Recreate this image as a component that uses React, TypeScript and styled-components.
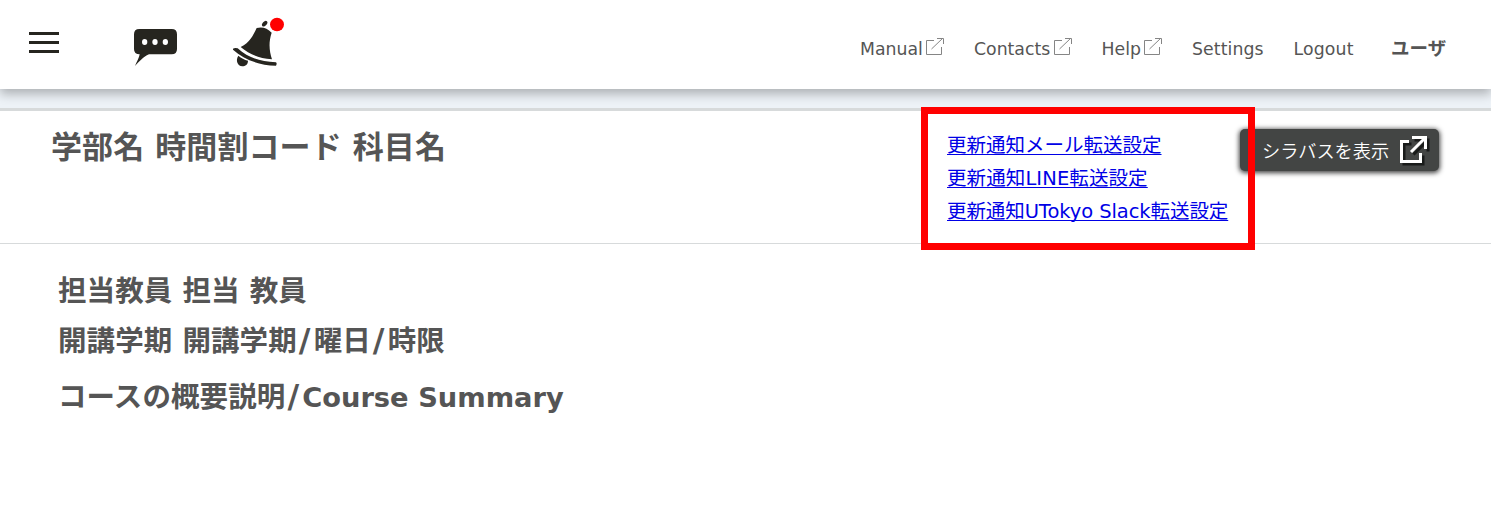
import React from "react";
import styled, { createGlobalStyle } from "styled-components";

const Global = createGlobalStyle`
  * { box-sizing: border-box; }
  body {
    margin: 0;
    background: #fff;
    color: #555;
    font-family: "DejaVu Sans", "Noto Sans CJK JP", sans-serif;
  }
  h1, h2, p, ul { margin: 0; padding: 0; font-weight: inherit; }
`;

const Page = styled.div`
  display: flex;
  flex-direction: column;
  height: 525px;
  overflow: hidden;
`;

const Header = styled.header`
  position: relative;
  z-index: 1;
  display: flex;
  justify-content: space-between;
  height: 89px;
  background: #fff;
  box-shadow: 0 5px 10px rgba(0, 0, 0, 0.27);
`;

const Tools = styled.div`
  display: flex;
  align-items: flex-start;
  padding-left: 29px;
`;

const Menu = styled.div`
  display: flex;
  flex-direction: column;
  gap: 6px;
  width: 30px;
  margin-top: 32px;
`;

const MenuBar = styled.span`
  height: 3px;
  background: #26251f;
`;

const ToolIcon = styled.svg<{ $left: number; $top: number }>`
  flex: none;
  margin: ${(p) => p.$top}px 0 0 ${(p) => p.$left}px;
`;

const Nav = styled.nav`
  display: flex;
  padding: 37px 45px 0 0;
  height: 62px;
`;

const NavItem = styled.a<{ $width: number; $spacing?: number }>`
  display: flex;
  width: ${(p) => p.$width}px;
  font-size: 17.3px;
  line-height: 24px;
  letter-spacing: ${(p) => p.$spacing ?? 0}px;
  white-space: nowrap;
`;

const NavIcon = styled.svg`
  flex: none;
  margin: 0 0 0 3.5px;
`;

const UserName = styled.span`
  width: 55px;
  font-size: 18.5px;
  font-weight: 700;
  line-height: 24px;
  white-space: nowrap;
`;

const Strip = styled.div`
  flex: none;
  height: 22px;
  background: #edf2f7;
  border-bottom: 3px solid #d7dadb;
`;

const CourseBar = styled.section`
  display: flex;
  flex: none;
  height: 133px;
  border-bottom: 1px solid #d7dadb;
`;

const CourseTitle = styled.h1`
  flex: none;
  width: 921px;
  padding: 13px 0 0 51px;
  font-size: 31px;
  font-weight: 700;
  line-height: 46px;
  letter-spacing: 0.1px;
  white-space: nowrap;
`;

const LinkFrame = styled.ul`
  position: relative;
  z-index: 2;
  flex: none;
  width: 334px;
  height: 143px;
  margin-top: -4px;
  padding: 15px 0 0 19px;
  border: 7px solid #f00;
  list-style: none;
`;

const LinkRow = styled.li`
  height: 33px;
  line-height: 33px;
  white-space: nowrap;
`;

const ForwardLink = styled.a<{ $spacing?: number }>`
  color: #0000e6;
  font-size: 19.5px;
  letter-spacing: ${(p) => p.$spacing ?? 0}px;
  text-decoration: underline;
  text-decoration-thickness: 1px;
  text-decoration-skip-ink: none;
  text-underline-offset: 2px;
`;

const SyllabusButton = styled.button`
  display: flex;
  flex: none;
  align-items: center;
  width: 199px;
  height: 42px;
  margin: 18px 0 0 -15px;
  padding: 0 0 0 22px;
  border: 0;
  border-radius: 5px;
  background: #434544;
  box-shadow: 0 1px 5px 1px rgba(0, 0, 0, 0.75);
  color: #fff;
  font: 350 18.2px "Noto Sans CJK JP", sans-serif;
  white-space: nowrap;
`;

const ButtonIcon = styled.svg`
  flex: none;
  margin-left: 10px;
`;

const Details = styled.section`
  display: flex;
  flex-direction: column;
  padding: 26px 0 0 58px;
`;

const DetailLine = styled.h2<{ $gap: number }>`
  height: 44px;
  margin-bottom: ${(p) => p.$gap}px;
  font-size: 28.5px;
  font-weight: 700;
  line-height: 44px;
  letter-spacing: 0.1px;
  white-space: nowrap;
`;

const Slash = styled.span`
  padding: 0 3px 0 2px;
  font-size: 32px;
  line-height: 0;
`;

const Latin = styled.span`
  font-size: 27.3px;
  line-height: 0;
  letter-spacing: 0;
`;

const ExternalIcon = () => (
  <NavIcon width="18" height="18" viewBox="0 0 18 18" fill="none" stroke="#858585" strokeWidth="1">
    <path d="M8 3.5H0.5V17.5H15.5V10" />
    <path d="M5.5 12L17 1M11 1.5H17.5V7" />
  </NavIcon>
);

const App: React.FC = () => (
  <Page>
    <Global />
    <Header>
      <Tools>
        <Menu>
          <MenuBar />
          <MenuBar />
          <MenuBar />
        </Menu>
        <ToolIcon $left={75} $top={29} width="43" height="38" viewBox="0 0 129 114">
          <path
            fill="#26251f"
            d="M16 0H113Q129 0 129 16V60Q129 76 113 76H45C27 84 18 96 3 111C8 98 16 86 17 76Q0 76 0 60V16Q0 0 16 0Z"
          />
          <g fill="#fff">
            <ellipse cx="32" cy="39" rx="8" ry="9" />
            <ellipse cx="63" cy="39" rx="8" ry="9" />
            <ellipse cx="94" cy="39" rx="8" ry="9" />
          </g>
        </ToolIcon>
        <ToolIcon $left={55} $top={16} width="54" height="52" viewBox="696 48 162 156">
          <g fill="#26251f">
            <ellipse cx="794" cy="71" rx="6" ry="10" transform="rotate(42 794 71)" />
            <path d="M770 84Q795 77 815 98C805 128 808 153 816 178C775 175 748 162 722 141C752 127 760 104 770 84Z" />
            <path d="M699 146Q704 143 713 145C744 173 779 185 828 187Q832 191 828 197C774 197 731 176 699 149Z" />
            <path d="M715 167C724 174 733 179 744 182C744 193 736 199 727 199C712 198 706 180 715 167Z" />
          </g>
          <ellipse cx="831" cy="73.5" rx="21" ry="20" fill="#f00" />
        </ToolIcon>
      </Tools>
      <Nav>
        <NavItem $width={114}>Manual<ExternalIcon /></NavItem>
        <NavItem $width={127.5}>Contacts<ExternalIcon /></NavItem>
        <NavItem $width={90.5}>Help<ExternalIcon /></NavItem>
        <NavItem $width={101.5} $spacing={0.1}>Settings</NavItem>
        <NavItem $width={97.5} $spacing={0.15}>Logout</NavItem>
        <UserName>ユーザ</UserName>
      </Nav>
    </Header>
    <Strip />
    <CourseBar>
      <CourseTitle>学部名 時間割コード 科目名</CourseTitle>
      <LinkFrame>
        <LinkRow><ForwardLink>更新通知メール転送設定</ForwardLink></LinkRow>
        <LinkRow><ForwardLink $spacing={0.1}>更新通知LINE転送設定</ForwardLink></LinkRow>
        <LinkRow><ForwardLink $spacing={-0.08}>更新通知UTokyo Slack転送設定</ForwardLink></LinkRow>
      </LinkFrame>
      <SyllabusButton>
        シラバスを表示
        <ButtonIcon width="32" height="32" viewBox="0 0 32 32" fill="none" strokeWidth="3">
          <g stroke="#191b1a" transform="translate(2.5 2.5)">
            <path d="M10 7.5H2.5V27.5H21.5V19M13 3.5H26.5V15M26 4L12 18" />
          </g>
          <g stroke="#fff">
            <path d="M10 7.5H2.5V27.5H21.5V19M13 3.5H26.5V15M26 4L12 18" />
          </g>
        </ButtonIcon>
      </SyllabusButton>
    </CourseBar>
    <Details>
      <DetailLine $gap={6}>担当教員 担当 教員</DetailLine>
      <DetailLine $gap={12}>
        開講学期 開講学期<Slash>/</Slash>曜日<Slash>/</Slash>時限
      </DetailLine>
      <DetailLine $gap={0}>
        コースの概要説明<Slash>/</Slash><Latin>Course Summary</Latin>
      </DetailLine>
    </Details>
  </Page>
);

export default App;
